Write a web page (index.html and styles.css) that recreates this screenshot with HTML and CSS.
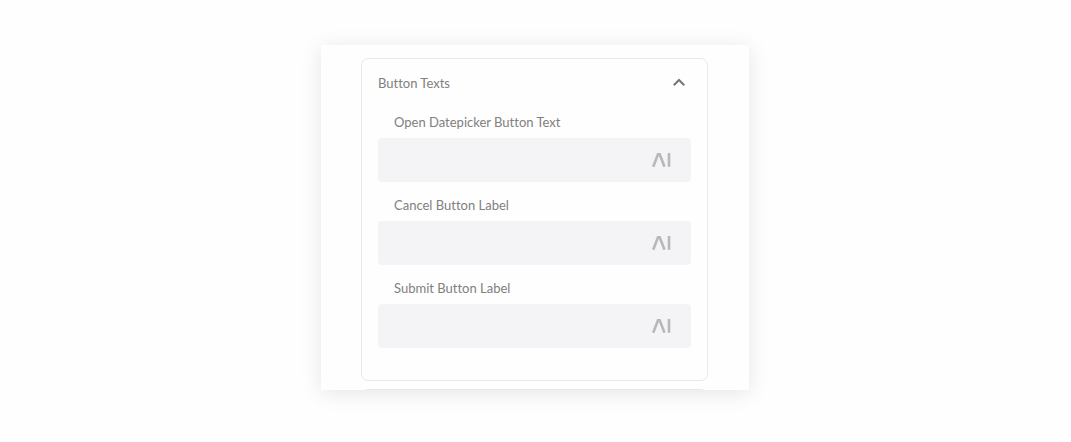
FILE: index.html
```html
<!DOCTYPE html>
<html lang="en">
<head>
<meta charset="utf-8">
<meta name="viewport" content="width=device-width, initial-scale=1">
<title>Button Texts</title>
<link rel="stylesheet" href="styles.css">
</head>
<body>
<main class="panel">
  <section class="card">
    <button class="card-header" type="button" aria-expanded="true" aria-controls="fields">
      <span>Button Texts</span>
      <svg class="chevron" viewBox="0 0 14 10" aria-hidden="true"><path d="M1.8 7.2 7 2l5.200 5.200"/></svg>
    </button>
    <form class="fields" id="fields">
      <div class="field">
        <label for="open-text">Open Datepicker Button Text</label>
        <div class="control">
          <input id="open-text" type="text">
          <svg class="mark" viewBox="0 0 20 14" aria-hidden="true"><path d="M1.200 13.800 6 1.300h1.700l4.800 12.500M17 0v13.800"/></svg>
        </div>
      </div>
      <div class="field">
        <label for="cancel-label">Cancel Button Label</label>
        <div class="control">
          <input id="cancel-label" type="text">
          <svg class="mark" viewBox="0 0 20 14" aria-hidden="true"><path d="M1.200 13.800 6 1.300h1.700l4.800 12.500M17 0v13.800"/></svg>
        </div>
      </div>
      <div class="field">
        <label for="submit-label">Submit Button Label</label>
        <div class="control">
          <input id="submit-label" type="text">
          <svg class="mark" viewBox="0 0 20 14" aria-hidden="true"><path d="M1.200 13.800 6 1.300h1.700l4.800 12.500M17 0v13.800"/></svg>
        </div>
      </div>
    </form>
  </section>
  <div class="next"><div class="next-card"></div></div>
</main>
</body>
</html>
```
FILE: styles.css
```css
* {
  box-sizing: border-box;
}

body {
  margin: 0;
  padding: 45px 1px 45px 0;
  background: #fefefe;
  color: #808080;
  font: 13px/16px Lato, "Open Sans", sans-serif;
  font-variant-ligatures: none;
}

.panel {
  width: 100%;
  max-width: 428px;
  margin: 0 auto;
  padding: 13px 41px 0 40px;
  background: #fefefe;
  box-shadow: 0 3px 20px rgba(0, 0, 0, 0.1);
}

.card {
  padding: 16px 16px 32px;
  border: 1px solid #e9e9e9;
  border-radius: 7px;
}

.card-header {
  display: flex;
  align-items: center;
  justify-content: space-between;
  width: 100%;
  padding: 0 5px 0 0;
  border: 0;
  background: none;
  color: inherit;
  font: inherit;
  text-align: left;
}

.chevron {
  width: 14px;
  height: 10px;
  fill: none;
  stroke: #747474;
  stroke-width: 2;
}

.fields {
  display: flex;
  flex-direction: column;
  gap: 15px;
  margin-top: 23px;
}

.field {
  display: flex;
  flex-direction: column;
  gap: 8px;
}

.field label {
  padding-left: 16px;
}

.control {
  display: flex;
  align-items: center;
  height: 44px;
  padding: 0 19px 0 16px;
  border-radius: 4px;
  background: #f4f4f6;
}

.control input {
  flex: 1;
  min-width: 0;
  height: 100%;
  padding: 0;
  border: 0;
  outline: 0;
  background: none;
  color: inherit;
  font: inherit;
}

.mark {
  width: 20px;
  height: 14px;
  fill: none;
  stroke: #b8b8b8;
  stroke-width: 2.600;
}

.next {
  height: 9px;
  padding-top: 8px;
  overflow: hidden;
}

.next-card {
  height: 16px;
  border: 1px solid #e9e9e9;
  border-radius: 7px;
}
```
